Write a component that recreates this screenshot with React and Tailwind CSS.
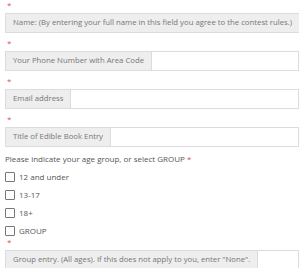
import React from 'react';

const fields = [
    'Name: (By entering your full name in this field you agree to the contest rules.)',
    'Your Phone Number with Area Code',
    'Email address',
    'Title of Edible Book Entry',
];

const InputGroup = ({ label }) => (
    <div className="flex h-[20px] items-stretch">
        <span className="flex items-center whitespace-nowrap border border-[#dcdcdc] bg-[#eeeeee] px-[7px] text-[7.75px] text-[#777]">
            {label}
        </span>
        <input type="text" className="min-w-0 flex-1 border border-l-0 border-[#dcdcdc] bg-white outline-none" />
    </div>
);

const Required = () => <div className="h-[13px] pl-[2px] leading-[9px] text-[#d9534f]">*</div>;

const ages = ['12 and under', '13-17', '18+', 'GROUP'];

export default function App() {
    return (
        <div className="w-[299px] h-[268px] overflow-hidden bg-white pl-[5px] font-['Open_Sans',sans-serif] text-[8px] text-[#555]">
            {fields.map((f) => (
                <div key={f} className="mb-[5px]">
                    <Required />
                    <InputGroup label={f} />
                </div>
            ))}
            <p className="mt-[6px]">
                Please indicate your age group, or select GROUP <span className="text-[#d9534f]">*</span>
            </p>
            <div className="mt-[6px] flex flex-col gap-[7px]">
                {ages.map((a) => (
                    <label key={a} className="flex h-[11px] items-center gap-[4px]">
                        <span className="h-[10px] w-[10px] rounded-[1px] border border-[#777] bg-white" />
                        {a}
                    </label>
                ))}
            </div>
            <div className="mt-[1px]">
                <Required />
                <InputGroup label={'Group entry. (All ages). If this does not apply to you, enter "None".'} />
            </div>
        </div>
    );
}
